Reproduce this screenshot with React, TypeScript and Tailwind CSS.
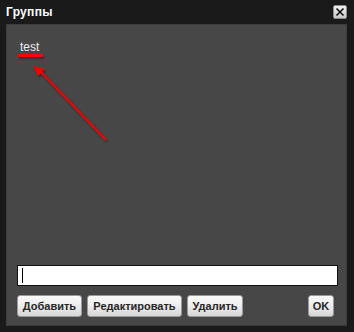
import React from "react"

const buttons = [
  { label: "Добавить", w: "w-[65px]" },
  { label: "Редактировать", w: "w-[95px]" },
  { label: "Удалить", w: "w-[56px]" },
]

function Btn({ label, className = "" }: { label: string; className?: string }) {
  return (
    <button
      className={
        "h-[22px] flex items-center justify-center rounded-[3px] border border-[#9a9a9a] bg-gradient-to-b from-[#fafafa] via-[#ececec] to-[#d6d6d6] text-[11px] font-bold text-[#262626] leading-none " +
        className
      }
    >
      {label}
    </button>
  )
}

export default function App() {
  return (
    <div
      className="w-[354px] h-[332px] bg-[#1a1a1a] flex flex-col select-none"
      style={{ fontFamily: '"Liberation Sans", Arial, sans-serif' }}
    >
      {/* title bar */}
      <div className="h-[24px] flex items-center justify-between pl-[6px] pr-[7px]">
        <span className="text-[12px] font-bold text-white tracking-[0.3px]">Группы</span>
        <div className="w-[14px] h-[14px] rounded-[2px] border border-[#8c8c8c] bg-gradient-to-b from-[#f0f0f0] to-[#c8c8c8] flex items-center justify-center">
          <svg width="10" height="10" viewBox="0 0 10 10">
            <path d="M1.5 1.5 L8.5 8.5 M8.5 1.5 L1.5 8.5" stroke="#111" strokeWidth="1.6" />
          </svg>
        </div>
      </div>

      {/* panel */}
      <div className="mx-[6px] w-[341px] h-[302px] bg-[#474747] border border-[#3c3c3c] flex flex-col pl-[10px] pr-[8px] pb-[8px]">
        <div className="relative flex-1 pt-[15px] pl-[3px]">
          <div className="text-[12px] text-[#eeeeee] leading-[14px]">test</div>
          {/* annotation */}
          <svg className="absolute left-0 top-0" width="110" height="130" viewBox="0 0 110 130">
            <defs>
              <filter id="sh" x="-20%" y="-20%" width="140%" height="140%">
                <feDropShadow dx="1" dy="1.5" stdDeviation="1" floodColor="#000" floodOpacity="0.45" />
              </filter>
            </defs>
            <g filter="url(#sh)">
              <rect x="1" y="29" width="25" height="3" fill="#ff0000" />
              <line x1="89" y1="115" x2="22" y2="45" stroke="#ee0000" strokeWidth="2" />
              <polygon points="16,41 28,44 21,51" fill="#ee0000" />
            </g>
          </svg>
        </div>

        <div className="h-[21px] bg-white border border-[#111] flex items-center pl-[4px]">
          <div className="w-[1px] h-[15px] bg-black" />
        </div>

        <div className="mt-[9px] flex gap-[5px]">
          {buttons.map((b) => (
            <Btn key={b.label} label={b.label} className={b.w} />
          ))}
          <Btn label="OK" className="w-[26px] ml-auto mr-[4px]" />
        </div>
      </div>
    </div>
  )
}
